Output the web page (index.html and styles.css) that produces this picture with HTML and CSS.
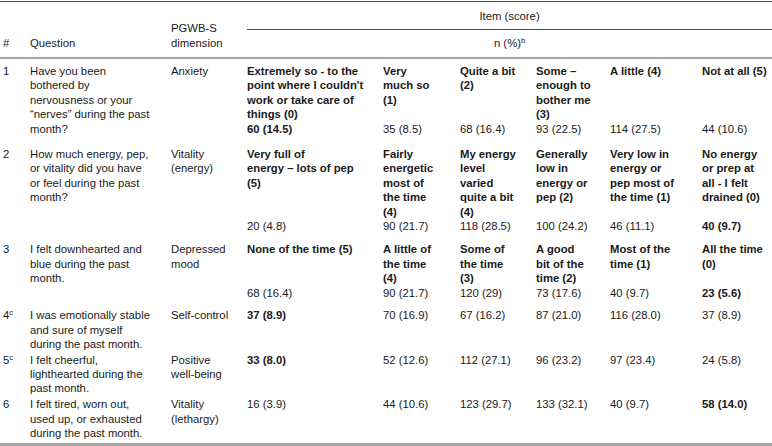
FILE: index.html
```html
<!DOCTYPE html>
<html lang="en">
<head>
<meta charset="utf-8">
<title>PGWB-S items</title>
<link rel="stylesheet" href="styles.css">
</head>
<body>
<table class="tbl">
  <colgroup>
    <col class="c-num"><col class="c-q"><col class="c-dim">
    <col class="c-1"><col class="c-2"><col class="c-3"><col class="c-4"><col class="c-5"><col class="c-6">
  </colgroup>
  <thead>
    <tr class="h1">
      <th rowspan="2" class="num">#</th>
      <th rowspan="2">Question</th>
      <th rowspan="2">PGWB-S<br>dimension</th>
      <th colspan="6" class="span">Item (score)</th>
    </tr>
    <tr class="h2">
      <th colspan="6" class="span">n (%)<sup>b</sup></th>
    </tr>
  </thead>
  <tbody>
    <tr class="lbl first">
      <td rowspan="2" class="num">1</td>
      <td rowspan="2">Have you been<br>bothered by<br>nervousness or your<br>“nerves” during the past<br>month?</td>
      <td rowspan="2">Anxiety</td>
      <td>Extremely so - to the<br>point where I couldn't<br>work or take care of<br>things (0)</td>
      <td>Very<br>much so<br>(1)</td>
      <td>Quite a bit<br>(2)</td>
      <td>Some –<br>enough to<br>bother me<br>(3)</td>
      <td>A little (4)</td>
      <td>Not at all (5)</td>
    </tr>
    <tr class="val">
      <td><b>60 (14.5)</b></td><td>35 (8.5)</td><td>68 (16.4)</td><td>93 (22.5)</td><td>114 (27.5)</td><td>44 (10.6)</td>
    </tr>
    <tr class="lbl second">
      <td rowspan="2" class="num">2</td>
      <td rowspan="2">How much energy, pep,<br>or vitality did you have<br>or feel during the past<br>month?</td>
      <td rowspan="2">Vitality<br>(energy)</td>
      <td>Very full of<br>energy – lots of pep<br>(5)</td>
      <td>Fairly<br>energetic<br>most of<br>the time<br>(4)</td>
      <td>My energy<br>level<br>varied<br>quite a bit<br>(4)</td>
      <td>Generally<br>low in<br>energy or<br>pep (2)</td>
      <td>Very low in<br>energy or<br>pep most of<br>the time (1)</td>
      <td>No energy<br>or prep at<br>all - I felt<br>drained (0)</td>
    </tr>
    <tr class="val">
      <td>20 (4.8)</td><td>90 (21.7)</td><td>118 (28.5)</td><td>100 (24.2)</td><td>46 (11.1)</td><td><b>40 (9.7)</b></td>
    </tr>
    <tr class="lbl">
      <td rowspan="2" class="num">3</td>
      <td rowspan="2">I felt downhearted and<br>blue during the past<br>month.</td>
      <td rowspan="2">Depressed<br>mood</td>
      <td>None of the time (5)</td>
      <td>A little of<br>the time<br>(4)</td>
      <td>Some of<br>the time<br>(3)</td>
      <td>A good<br>bit of the<br>time (2)</td>
      <td>Most of the<br>time (1)</td>
      <td>All the time<br>(0)</td>
    </tr>
    <tr class="val">
      <td>68 (16.4)</td><td>90 (21.7)</td><td>120 (29)</td><td>73 (17.6)</td><td>40 (9.7)</td><td><b>23 (5.6)</b></td>
    </tr>
    <tr class="one after">
      <td class="num">4<sup>c</sup></td>
      <td>I was emotionally stable<br>and sure of myself<br>during the past month.</td>
      <td>Self-control</td>
      <td><b>37 (8.9)</b></td><td>70 (16.9)</td><td>67 (16.2)</td><td>87 (21.0)</td><td>116 (28.0)</td><td>37 (8.9)</td>
    </tr>
    <tr class="one">
      <td class="num">5<sup>c</sup></td>
      <td>I felt cheerful,<br>lighthearted during the<br>past month.</td>
      <td>Positive<br>well-being</td>
      <td><b>33 (8.0)</b></td><td>52 (12.6)</td><td>112 (27.1)</td><td>96 (23.2)</td><td>97 (23.4)</td><td>24 (5.8)</td>
    </tr>
    <tr class="one last">
      <td class="num">6</td>
      <td>I felt tired, worn out,<br>used up, or exhausted<br>during the past month.</td>
      <td>Vitality<br>(lethargy)</td>
      <td>16 (3.9)</td><td>44 (10.6)</td><td>123 (29.7)</td><td>133 (32.1)</td><td>40 (9.7)</td><td><b>58 (14.0)</b></td>
    </tr>
  </tbody>
</table>
</body>
</html>
```
FILE: styles.css
```css
html, body {
  margin: 0;
  padding: 0;
  background: #ffffff;
}

body {
  font-family: "Liberation Sans", Arial, sans-serif;
  font-size: 11.3px;
  line-height: 14.4px;
  color: #1a1a1a;
}

.tbl {
  width: 772px;
  margin-top: 1px;
  table-layout: fixed;
  border-collapse: separate;
  border-spacing: 0;
  border-top: 1px solid #4a4a4a;
  border-bottom: 3px solid #a6a6a6;
}

.c-num { width: 30px; }
.c-q { width: 141px; }
.c-dim { width: 76px; }
.c-1 { width: 136px; }
.c-2 { width: 77px; }
.c-3 { width: 76px; }
.c-4 { width: 74px; }
.c-5 { width: 92px; }
.c-6 { width: 70px; }

th, td {
  padding: 0;
  text-align: left;
  vertical-align: top;
  white-space: nowrap;
  font-weight: normal;
}

th.num, td.num {
  padding-left: 3px;
}

thead th {
  border-bottom: 2px solid #a6a6a6;
  vertical-align: bottom;
  padding-bottom: 6.6px;
}

thead th.span {
  text-align: center;
  vertical-align: top;
}

.h1 th.span {
  padding-top: 7px;
  padding-bottom: 5.1px;
  border-bottom: 1px solid #4a4a4a;
}

.h2 th.span {
  padding-top: 6px;
  padding-bottom: 6.6px;
}

sup {
  font-size: 7.5px;
  line-height: 0;
  vertical-align: 4px;
}

td b {
  font-weight: bold;
}

.lbl td {
  font-weight: bold;
  padding-top: 5px;
}

.lbl td[rowspan] {
  font-weight: normal;
}

.first td {
  padding-top: 5.5px;
}

.second td {
  padding-top: 7px;
}

.val td {
  padding-bottom: 4px;
}

.one td {
  padding-top: 1.3px;
}

.one.after td {
  padding-top: 4px;
}

.one.last td {
  padding-bottom: 3px;
}
```
